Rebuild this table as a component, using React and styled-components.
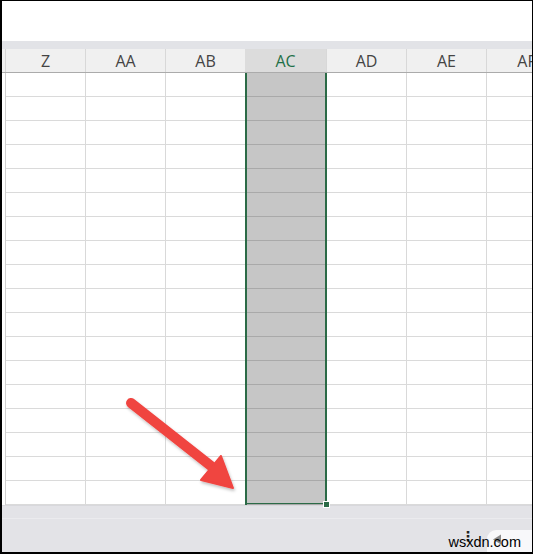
import React from "react";
import styled, { createGlobalStyle } from "styled-components";

const Global = createGlobalStyle`
  html, body { margin: 0; padding: 0; background: #fff; }
  * { box-sizing: border-box; }
`;

const Frame = styled.div`
  position: relative;
  width: 533px;
  height: 554px;
  border: 1px solid #000;
  border-left-width: 2px;
  border-bottom-width: 2px;
  overflow: hidden;
  display: flex;
  flex-direction: column;
  background: #fff;
  font-family: "Open Sans", "Noto Sans", sans-serif;
`;

const TopBlank = styled.div`
  height: 40px;
  flex: none;
  background: #fff;
`;

const Strip = styled.div`
  height: 8px;
  flex: none;
  background: #e2e3e7;
`;

const HeaderRow = styled.div`
  display: flex;
  height: 24px;
  flex: none;
  background: #f0f0f0;
  border-bottom: 1px solid #ababab;
`;

const Corner = styled.div`
  width: 4px;
  flex: none;
  border-right: 1px solid #d6d6d6;
`;

const ColHeader = styled.div`
  width: ${(p) => (p.$selected ? 82 : 80)}px;
  flex: none;
  display: flex;
  align-items: center;
  justify-content: center;
  font-size: 16px;
  color: ${(p) => (p.$selected ? "#1f7048" : "#444")};
  background: ${(p) => (p.$selected ? "#dcdcdc" : "transparent")};
  border-right: 1px solid #d8d8d8;
  ${(p) => p.$selected && "margin-left: -1px;"}
  line-height: 1;
  padding-top: 1px;
`;

const Grid = styled.div`
  display: flex;
  height: 432px;
  flex: none;
`;

const RowHeads = styled.div`
  width: 4px;
  flex: none;
  border-right: 1px solid #cfcfcf;
  background: #fff;
`;

const Column = styled.div`
  width: ${(p) => (p.$selected ? 82 : 80)}px;
  flex: none;
  display: flex;
  flex-direction: column;
  ${(p) =>
    p.$selected &&
    `
    margin-left: -1px;
    border-left: 2px solid #2b6b47;
    border-right: 2px solid #2b6b47;
    border-bottom: 2px solid #2b6b47;
    background: #c6c6c6;
    position: relative;
  `}
`;

const Cell = styled.div`
  height: 24px;
  flex: none;
  border-right: ${(p) => (p.$selected ? "none" : "1px solid #d9d9d9")};
  border-bottom: 1px solid ${(p) => (p.$selected ? "#a9a9a9" : "#dadada")};
  &:last-child {
    border-bottom: ${(p) => (p.$selected ? "none" : "1px solid #dadada")};
  }
`;

const FillHandle = styled.div`
  position: absolute;
  right: -5px;
  bottom: -5px;
  width: 7px;
  height: 7px;
  background: #2b6b47;
  border: 1px solid #fff;
`;

const BottomBar = styled.div`
  flex: 1;
  background: #e3e3e7;
  border-top: 1px solid #d8d8dc;
  display: flex;
  flex-direction: column;
`;

const BarTop = styled.div`
  height: 13px;
  flex: none;
  border-bottom: 1px solid #ebebee;
`;

const BarRow = styled.div`
  flex: 1;
  display: flex;
  justify-content: flex-end;
  align-items: flex-end;
  position: relative;
`;

const Tab = styled.div`
  width: 45px;
  height: 22px;
  background: #f8f8fa;
  border-radius: 9px 0 0 0;
  display: flex;
  align-items: flex-start;
  padding: 4px 0 0 5px;
`;

const Dots = styled.span`
  position: absolute;
  right: 57px;
  bottom: 9px;
  font-size: 14px;
  line-height: 1;
  color: #222;
  font-weight: bold;
  font-family: "DejaVu Sans", sans-serif;
`;

const Watermark = styled.span`
  position: absolute;
  right: 11px;
  bottom: 1px;
  font-family: "Liberation Sans", Arial, sans-serif;
  font-size: 14.5px;
  line-height: 1.1;
  color: #000;
`;

const ArrowSvg = styled.svg`
  position: absolute;
  left: 0;
  top: 0;
  pointer-events: none;
`;

const cols = ["Z", "AA", "AB", "AC", "AD", "AE", "AF"];
const ROWS = 18;

export default function App() {
  return (
    <>
      <Global />
      <Frame>
        <TopBlank />
        <Strip />
        <HeaderRow>
          <Corner />
          {cols.map((c) => (
            <ColHeader key={c} $selected={c === "AC"}>
              {c}
            </ColHeader>
          ))}
        </HeaderRow>
        <Grid>
          <RowHeads />
          {cols.map((c) => (
            <Column key={c} $selected={c === "AC"}>
              {Array.from({ length: ROWS }).map((_, i) => (
                <Cell key={i} $selected={c === "AC"} />
              ))}
              {c === "AC" && <FillHandle />}
            </Column>
          ))}
        </Grid>
        <BottomBar>
          <BarTop />
          <BarRow>
            <Tab>
              <svg width="10" height="11" viewBox="0 0 10 11">
                <path d="M9 0.5 L1 5.5 L9 10.5 Z" fill="#8a8a8a" />
              </svg>
            </Tab>
            <Dots>⋮</Dots>
            <Watermark>wsxdn.com</Watermark>
          </BarRow>
        </BottomBar>
        <ArrowSvg width="533" height="554" viewBox="0 0 533 554">
          <defs>
            <filter id="sh" x="-20%" y="-20%" width="140%" height="140%">
              <feDropShadow dx="1" dy="2" stdDeviation="1.5" floodColor="#000" floodOpacity="0.25" />
            </filter>
          </defs>
          <g filter="url(#sh)">
            <line x1="129" y1="402" x2="209" y2="465" stroke="#f04440" strokeWidth="10" strokeLinecap="round" />
            <path d="M219 455 L199 479 L231 487 Z" fill="#f04440" strokeLinejoin="round" stroke="#f04440" strokeWidth="2" />
          </g>
        </ArrowSvg>
      </Frame>
    </>
  );
}
